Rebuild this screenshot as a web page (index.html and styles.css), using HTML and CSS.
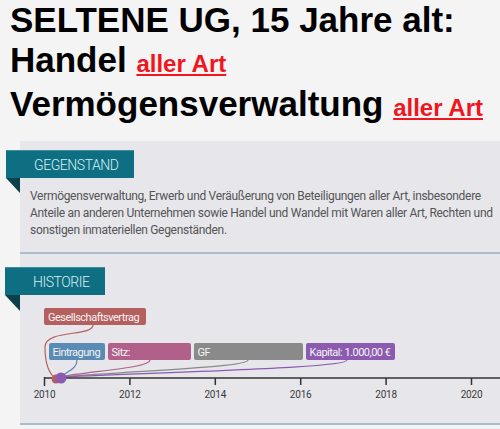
FILE: index.html
```html
<!DOCTYPE html>
<html lang="de">
<head>
<meta charset="utf-8">
<title>SELTENE UG</title>
<link rel="stylesheet" href="styles.css">
</head>
<body>
<header class="title">
  <h1 class="title-main">
    <span class="title-line">SELTENE UG, 15 Jahre alt:</span>
    <span class="title-line">Handel <a class="tag" href="#">aller Art</a></span>
    <span class="title-line">Vermögensverwaltung <a class="tag" href="#">aller Art</a></span>
  </h1>
</header>
<main class="panel">
  <section class="section section-first">
    <h2 class="ribbon">GEGENSTAND</h2>
    <p class="section-text">Vermögensverwaltung, Erwerb und Veräußerung von Beteiligungen aller Art, insbesondere Anteile an anderen Unternehmen sowie Handel und Wandel mit Waren aller Art, Rechten und sonstigen inmateriellen Gegenständen.</p>
  </section>
  <section class="section section-history">
    <h2 class="ribbon">HISTORIE</h2>
    <svg class="timeline" width="480" height="128" viewBox="0 0 480 128" xmlns="http://www.w3.org/2000/svg">
      <g fill="none" stroke-width="1.2">
        <path d="M73 30 C73 42 25 34 25 52 C25 68 29 79 36 84" stroke="#b5605e"/>
        <path d="M57 65 C57 75 46 76 40 83" stroke="#5a8bb5"/>
        <path d="M130 65 C130 73 70 76 40 82" stroke="#b0608a"/>
        <path d="M228 65 C228 72 130 75 40 82" stroke="#8a8a8a"/>
        <path d="M327 65 C327 72 210 75 42 82" stroke="#8c5bb0"/>
      </g>
      <g class="axis" stroke="#333" stroke-width="1.5">
        <line x1="24" y1="83" x2="480" y2="83"/>
        <line x1="24.5" y1="82" x2="24.5" y2="91"/>
        <line x1="109.9" y1="83" x2="109.9" y2="90"/>
        <line x1="195.3" y1="83" x2="195.3" y2="90"/>
        <line x1="280.7" y1="83" x2="280.7" y2="90"/>
        <line x1="366.1" y1="83" x2="366.1" y2="90"/>
        <line x1="451.5" y1="83" x2="451.5" y2="90"/>
      </g>
      <g class="years">
        <text x="24.5" y="102.5">2010</text>
        <text x="109.9" y="102.5">2012</text>
        <text x="195.3" y="102.5">2014</text>
        <text x="280.7" y="102.5">2016</text>
        <text x="366.1" y="102.5">2018</text>
        <text x="451.5" y="102.5">2020</text>
      </g>
      <circle cx="36" cy="84" r="4.5" fill="#b5605e"/>
      <circle cx="41" cy="83" r="5.5" fill="#8c5bb0"/>
      <g class="labels">
        <rect x="24" y="13" width="102" height="17" rx="2" fill="#b5605e"/>
        <text x="28" y="25.5">Gesellschaftsvertrag</text>
        <rect x="29" y="48" width="56" height="17" rx="2" fill="#5a8bb5"/>
        <text x="32.5" y="60.5">Eintragung</text>
        <rect x="88" y="48" width="83" height="17" rx="2" fill="#b0608a"/>
        <text x="91.5" y="60.5">Sitz:</text>
        <rect x="174" y="48" width="109" height="17" rx="2" fill="#8a8a8a"/>
        <text x="177.5" y="60.5">GF</text>
        <rect x="286" y="48" width="89" height="17" rx="2" fill="#8c5bb0"/>
        <text x="289.5" y="60.5">Kapital: 1.000,00 €</text>
      </g>
    </svg>
  </section>
</main>
</body>
</html>
```

FILE: styles.css
```css
html, body {
  margin: 0;
  padding: 0;
}

body {
  background: #f4f4f4;
  width: 500px;
  overflow: hidden;
}

.title {
  padding: 0 0 0 10px;
  height: 141px;
}

.title-main {
  margin: 0;
  font-family: "Liberation Sans", Arial, sans-serif;
  font-weight: bold;
  font-size: 35px;
  line-height: 40px;
  color: #000;
}

.title-line {
  display: block;
  white-space: nowrap;
}

.tag {
  font-size: 24px;
  color: #f0151f;
  text-decoration: underline;
  text-decoration-thickness: 2px;
  text-underline-offset: 2px;
}

.panel {
  margin-left: 20px;
  background: #e6e6eb;
  font-family: Roboto, "Noto Sans", sans-serif;
}

.section {
  border-bottom: 2px solid #abbecb;
}

.section-first {
  padding: 9px 4px 13px 10px;
}

.section-history {
  padding: 13px 0 0 0;
}

.ribbon {
  position: relative;
  display: inline-block;
  margin: 0 0 0 -24px;
  height: 28px;
  line-height: 28px;
  padding: 0 15px 0 28px;
  background: #0f6f82;
  border-top: 1px solid #3f8c9c;
  box-sizing: border-box;
  color: #d8eef3;
  font-size: 14px;
  font-weight: 300;
  letter-spacing: -0.45px;
}

.section-history .ribbon {
  margin-left: -15px;
  padding-right: 15px;
}

.ribbon::after {
  content: "";
  position: absolute;
  left: 0;
  top: 100%;
  width: 0;
  height: 0;
  border-top: 15px solid #0c3f4c;
  border-left: 14px solid transparent;
}

.section-history .ribbon::after {
  border-left-width: 15px;
  border-top-width: 16px;
}

.section-text {
  margin: 10px 0 0 0;
  font-size: 12px;
  line-height: 17px;
  font-weight: 400;
  letter-spacing: -0.3px;
  color: #555;
}

.timeline {
  display: block;
}

.timeline .years text {
  font-family: Roboto, "Noto Sans", sans-serif;
  font-size: 10px;
  letter-spacing: -0.2px;
  fill: #3a3a3a;
  text-anchor: middle;
}

.timeline .labels text {
  font-family: Roboto, "Noto Sans", sans-serif;
  font-size: 11px;
  letter-spacing: -0.5px;
  fill: #f4f4f4;
}
```
